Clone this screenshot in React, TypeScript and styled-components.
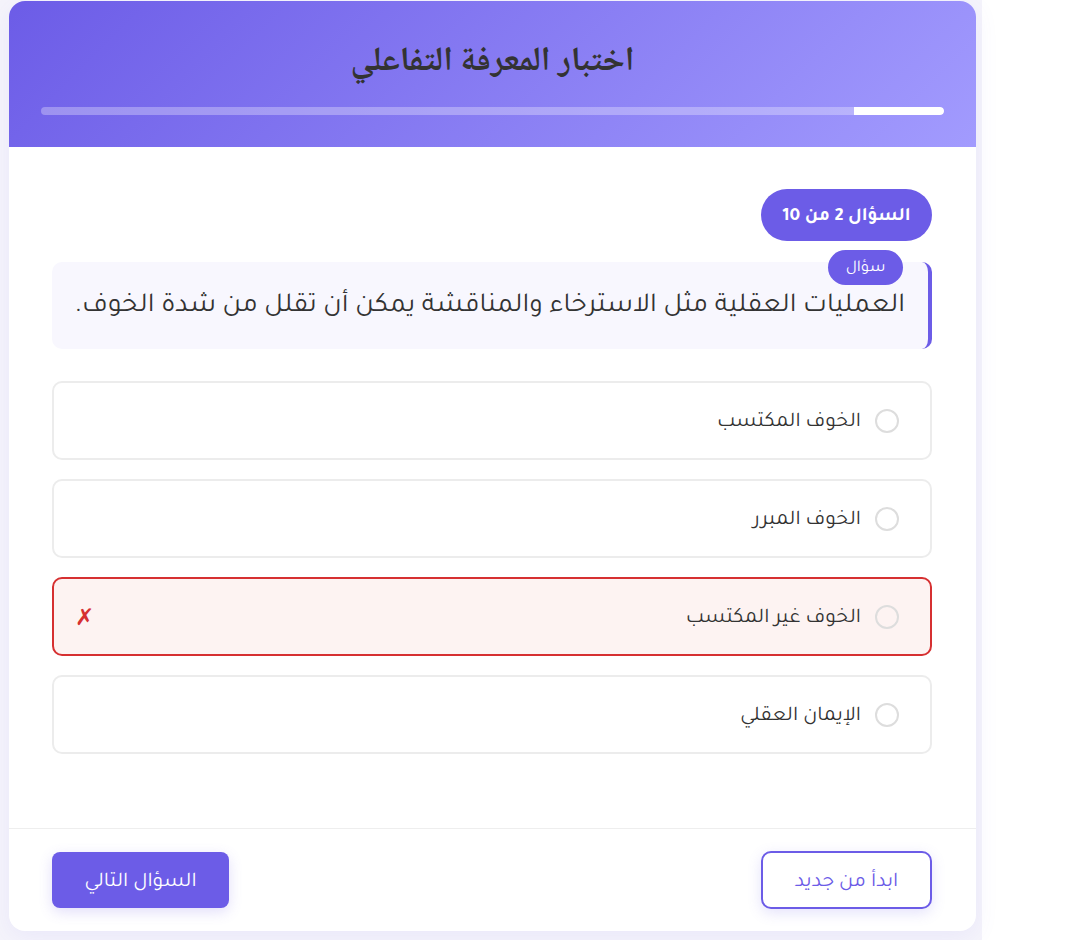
import React from "react";
import styled, { createGlobalStyle } from "styled-components";

const GlobalStyle = createGlobalStyle`
  * { box-sizing: border-box; }
  body {
    margin: 0;
    background: #ffffff;
    font-family: "Tajawal", "Noto Sans Arabic", "DejaVu Sans", sans-serif;
  }
`;

const Page = styled.div`
  width: 982px;
  min-height: 940px;
  background: #f5f4fb;
  padding: 1px 6px 9px 9px;
  direction: rtl;
`;

const Card = styled.div`
  background: #ffffff;
  border-radius: 16px;
  box-shadow: 0 6px 24px rgba(108, 92, 231, 0.08);
  overflow: hidden;
  display: flex;
  flex-direction: column;
  height: 930px;
`;

const Header = styled.header`
  background: linear-gradient(135deg, #6c5ce7 0%, #a29bfe 100%);
  padding: 39px 32px 32px;
  text-align: center;
`;

const Title = styled.h1`
  margin: 0 0 21px;
  font-family: "Noto Naskh Arabic", "DejaVu Sans", serif;
  font-size: 34px;
  font-weight: 700;
  color: #333333;
  line-height: 46px;
`;

const Progress = styled.div`
  height: 8px;
  border-radius: 4px;
  background: rgba(255, 255, 255, 0.3);
  overflow: hidden;
  display: flex;
`;

const ProgressFill = styled.div`
  height: 100%;
  background: #ffffff;
  border-radius: 0 4px 4px 0;
`;

const Body = styled.main`
  flex: 1;
  padding: 42px 44px 0 43px;
  display: flex;
  flex-direction: column;
`;

const CounterPill = styled.div`
  align-self: flex-start;
  background: #6c5ce7;
  color: #ffffff;
  font-weight: 700;
  font-size: 19px;
  height: 52px;
  width: 171px;
  padding-top: 4px;
  border-radius: 26px;
  display: flex;
  align-items: center;
  justify-content: center;
`;

const QuestionBox = styled.div`
  position: relative;
  margin-top: 21px;
  background: #f8f7fe;
  border-right: 4px solid #6c5ce7;
  border-radius: 10px;
  padding: 26px 23px 22px 20px;
  font-size: 27.5px;
  line-height: 39px;
  color: #333333;
`;

const QuestionTag = styled.span`
  position: absolute;
  top: -12px;
  right: 25px;
  background: #6c5ce7;
  color: #ffffff;
  font-size: 16.5px;
  height: 35px;
  width: 75px;
  padding-top: 3px;
  border-radius: 18px;
  display: flex;
  align-items: center;
  justify-content: center;
  line-height: 1;
`;

const Options = styled.div`
  margin-top: 32px;
  display: flex;
  flex-direction: column;
  gap: 19px;
`;

const Option = styled.div<{ $wrong?: boolean }>`
  height: 79px;
  display: flex;
  align-items: center;
  gap: 14px;
  padding: 0 31px 0 21px;
  border: 2px solid ${(p) => (p.$wrong ? "#d63031" : "#ececec")};
  background: ${(p) => (p.$wrong ? "#fdf3f2" : "#ffffff")};
  border-radius: 10px;
  font-size: 21px;
  color: #333333;
`;

const OptionLabel = styled.span`
  padding-top: 4px;
`;

const Radio = styled.span`
  width: 24px;
  height: 24px;
  border-radius: 50%;
  border: 2px solid #dddddd;
  flex-shrink: 0;
`;

const WrongMark = styled.span`
  margin-right: auto;
  color: #d63031;
  font-size: 23px;
  font-family: "DejaVu Sans", sans-serif;
`;

const Footer = styled.footer`
  border-top: 1px solid #eeeeee;
  padding: 22px 44px 22px 43px;
  display: flex;
  justify-content: space-between;
  align-items: center;
`;

const OutlineButton = styled.button`
  font-family: inherit;
  width: 171px;
  height: 58px;
  padding: 4px 0 0;
  border: 2px solid #6c5ce7;
  border-radius: 10px;
  background: #ffffff;
  color: #6c5ce7;
  font-size: 21px;
  box-shadow: 0 4px 14px rgba(108, 92, 231, 0.18);
  cursor: pointer;
`;

const PrimaryButton = styled.button`
  font-family: inherit;
  width: 177px;
  height: 56px;
  padding: 4px 0 0;
  border: none;
  border-radius: 8px;
  background: #6c5ce7;
  color: #ffffff;
  font-size: 21px;
  box-shadow: 0 4px 14px rgba(108, 92, 231, 0.2);
  cursor: pointer;
`;

const options = [
  { text: "الخوف المكتسب" },
  { text: "الخوف المبرر" },
  { text: "الخوف غير المكتسب", wrong: true },
  { text: "الإيمان العقلي" },
];

export default function App() {
  const current = 2;
  const total = 10;
  const progress = ((current - 1) / total) * 100;
  return (
    <>
      <GlobalStyle />
      <Page>
        <Card>
          <Header>
            <Title>اختبار المعرفة التفاعلي</Title>
            <Progress>
              <ProgressFill style={{ width: `${progress}%` }} />
            </Progress>
          </Header>
          <Body>
            <CounterPill>
              السؤال {current} من {total}
            </CounterPill>
            <QuestionBox>
              <QuestionTag>سؤال</QuestionTag>
              العمليات العقلية مثل الاسترخاء والمناقشة يمكن أن تقلل من شدة الخوف.
            </QuestionBox>
            <Options>
              {options.map((o) => (
                <Option key={o.text} $wrong={o.wrong}>
                  <Radio />
                  <OptionLabel>{o.text}</OptionLabel>
                  {o.wrong && <WrongMark>✗</WrongMark>}
                </Option>
              ))}
            </Options>
          </Body>
          <Footer>
            <OutlineButton>ابدأ من جديد</OutlineButton>
            <PrimaryButton>السؤال التالي</PrimaryButton>
          </Footer>
        </Card>
      </Page>
    </>
  );
}
